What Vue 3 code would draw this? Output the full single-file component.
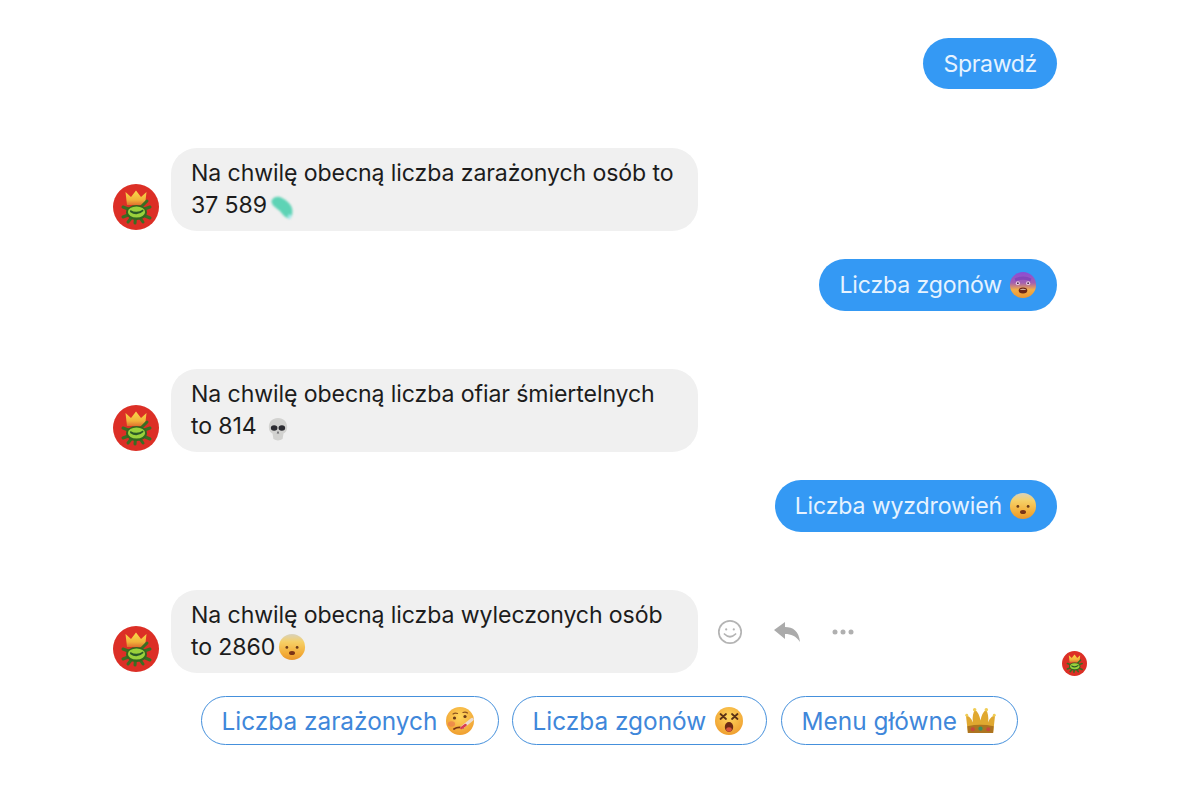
<script setup>
</script>

<template>
  <div class="page">
    <svg class="defs" width="0" height="0" aria-hidden="true">
      <defs>
        <radialGradient id="face" cx="50%" cy="35%" r="70%">
          <stop offset="0" stop-color="#ffd75e" />
          <stop offset="1" stop-color="#ee9a2c" />
        </radialGradient>
        <linearGradient id="sadface" x1="0" y1="0" x2="0" y2="1">
          <stop offset="0" stop-color="#d8d2bd" />
          <stop offset="0.3" stop-color="#f6d067" />
          <stop offset="0.75" stop-color="#f3ad38" />
          <stop offset="1" stop-color="#e8952c" />
        </linearGradient>
        <linearGradient id="purple" x1="0" y1="0" x2="0" y2="1">
          <stop offset="0" stop-color="#8a4bd6" />
          <stop offset="0.42" stop-color="#a45fb0" />
          <stop offset="0.68" stop-color="#f2ae48" />
          <stop offset="1" stop-color="#eb9530" />
        </linearGradient>
        <linearGradient id="crownfill" x1="0" y1="0" x2="0" y2="1">
          <stop offset="0" stop-color="#f8da4a" />
          <stop offset="0.65" stop-color="#f2b13a" />
          <stop offset="1" stop-color="#e0712e" />
        </linearGradient>
        <symbol id="avatar" viewBox="0 0 46 46">
          <circle cx="23" cy="23" r="23" fill="#dc2f26" />
          <path d="M14 21 L12.5 8 L18 13 L23 6.5 L28 13 L33.5 8 L32 21 Z" fill="url(#crownfill)" />
          <path d="M23 28 L10 23 M23 28 L10 33 M23 28 L15 38 M23 28 L22 39 M23 28 L30 38 M23 28 L37 34 M23 28 L37 23 M23 28 L34 17" stroke="#3a6e22" stroke-width="3" stroke-linecap="round" />
          <ellipse cx="23.5" cy="28.5" rx="10.5" ry="7.5" fill="#34661f" />
          <ellipse cx="23.5" cy="28" rx="8.6" ry="5.6" fill="#9ad13c" />
          <path d="M17 28 Q24 33 30.5 27 L30 25.4 Q24 30 17.4 26 Z" fill="#2a5a28" />
        </symbol>
        <symbol id="wave" viewBox="0 0 30 34">
          <path d="M3 8 C6 3 12 3 16 6 C22 9 28 15 27 22 C27 28 23 30 20 28 C16 26 15 23 12 20 C9 17 2 14 3 8 Z" fill="#5ed3b5" />
          <path d="M22 25 C25 23 27 26 25 29 C23 31 21 29 22 25 Z" fill="#a7e8ea" />
        </symbol>
        <symbol id="shock" viewBox="0 0 30 30">
          <circle cx="15" cy="15" r="14" fill="url(#purple)" />
          <path d="M6 8 Q15 4 24 8 L23 11 Q15 8 7 11 Z" fill="#7a3fb8" opacity="0.7" />
          <ellipse cx="9.5" cy="13" rx="2.2" ry="2" fill="#e9cfe9" />
          <ellipse cx="20.5" cy="13" rx="2.2" ry="2" fill="#e9cfe9" />
          <circle cx="9.5" cy="13" r="1" fill="#4a2a4a" />
          <circle cx="20.5" cy="13" r="1" fill="#4a2a4a" />
          <ellipse cx="15" cy="21" rx="4.6" ry="3.2" fill="#6d2716" />
          <path d="M11.8 19.6 Q15 18.6 18.2 19.6 L17.8 20.2 L12.2 20.2 Z" fill="#f0dfcc" />
        </symbol>
        <symbol id="sad" viewBox="0 0 30 30">
          <circle cx="15" cy="15" r="14" fill="url(#sadface)" />
          <circle cx="9.5" cy="15.5" r="1.5" fill="#6b3a18" />
          <circle cx="20.5" cy="15.5" r="1.5" fill="#6b3a18" />
          <ellipse cx="15" cy="21.5" rx="3.2" ry="2.2" fill="#7a3316" />
        </symbol>
        <symbol id="skull" viewBox="0 0 24 28">
          <path d="M12 2 C18 2 22 6 22 12 C22 16 20 18 18 19 L17 25 C14 27 10 27 7 25 L6 19 C4 18 2 16 2 12 C2 6 6 2 12 2 Z" fill="#d2d2d0" />
          <ellipse cx="7.8" cy="13" rx="3.6" ry="3" fill="#2c2c32" />
          <ellipse cx="16.2" cy="13" rx="3.6" ry="3" fill="#2c2c32" />
          <path d="M12 16 L13.4 19 L10.6 19 Z" fill="#66666a" />
        </symbol>
        <symbol id="thermo" viewBox="0 0 30 30">
          <circle cx="15" cy="15" r="14" fill="url(#face)" />
          <ellipse cx="6.5" cy="18" rx="3.6" ry="2.8" fill="#e9784f" opacity="0.65" />
          <circle cx="9.5" cy="12" r="1.6" fill="#6b3a18" />
          <circle cx="20" cy="10.5" r="1.6" fill="#6b3a18" />
          <path d="M8 8 Q10 6.5 12.5 7.5 M18 6.5 Q20.5 5.5 22.5 7" fill="none" stroke="#8a5220" stroke-width="1.2" stroke-linecap="round" />
          <path d="M9 23 Q13 20.5 18 22" fill="none" stroke="#7a3316" stroke-width="1.8" stroke-linecap="round" />
          <path d="M17 21.5 L27 13.5" stroke="#ecdcd0" stroke-width="3.2" stroke-linecap="round" />
          <path d="M16.5 22 L20.5 19" stroke="#d93c52" stroke-width="2.6" stroke-linecap="round" />
        </symbol>
        <symbol id="dizzy" viewBox="0 0 30 30">
          <circle cx="15" cy="15" r="14" fill="url(#face)" />
          <path d="M6.5 8 L12 13 M12 8 L6.5 13 M18 8 L23.5 13 M23.5 8 L18 13" stroke="#5b3216" stroke-width="1.8" stroke-linecap="round" />
          <ellipse cx="15" cy="21" rx="4.2" ry="5" fill="#6d2a14" />
          <ellipse cx="15" cy="23.5" rx="2.8" ry="2.2" fill="#d9573d" />
        </symbol>
        <symbol id="crown" viewBox="0 0 32 28">
          <path d="M3 27 L1 9 C4 9 7 12 8 16 C7.5 10 8.5 6 10 3 C13.5 5 15 9 16 14 C17 9 18.5 5 22 3 C23.5 6 24.5 10 24 16 C25 12 28 9 31 9 L29 27 Z" fill="#e0a830" />
          <path d="M3 27 L2.4 20 Q16 17 29.6 20 L29 27 Z" fill="#ad7420" />
          <circle cx="1.8" cy="8.5" r="1.5" fill="#f0cd55" />
          <circle cx="10" cy="3" r="1.8" fill="#f0cd55" />
          <circle cx="22" cy="3" r="1.8" fill="#f0cd55" />
          <circle cx="30.2" cy="8.5" r="1.5" fill="#f0cd55" />
          <circle cx="8" cy="23" r="2" fill="#c9463e" />
          <circle cx="16" cy="22.5" r="2.2" fill="#3d8f5a" />
          <circle cx="24" cy="23" r="2" fill="#c9463e" />
        </symbol>
      </defs>
    </svg>

    <div class="row row-out first">
      <div class="bubble out">Sprawdź</div>
    </div>

    <div class="row row-in">
      <svg class="avatar"><use href="#avatar" /></svg>
      <div class="bubble in">
        Na chwilę obecną liczba zarażonych osób to<br />37 589<svg class="emoji wave"><use href="#wave" /></svg>
      </div>
    </div>

    <div class="row row-out">
      <div class="bubble out">Liczba zgonów <svg class="emoji"><use href="#shock" /></svg></div>
    </div>

    <div class="row row-in">
      <svg class="avatar"><use href="#avatar" /></svg>
      <div class="bubble in">
        Na chwilę obecną liczba ofiar śmiertelnych<br />to 814 <svg class="emoji skull"><use href="#skull" /></svg>
      </div>
    </div>

    <div class="row row-out">
      <div class="bubble out">Liczba wyzdrowień <svg class="emoji"><use href="#sad" /></svg></div>
    </div>

    <div class="row row-in">
      <svg class="avatar"><use href="#avatar" /></svg>
      <div class="bubble in">
        Na chwilę obecną liczba wyleczonych osób<br />to 2860<svg class="emoji after-num"><use href="#sad" /></svg>
      </div>
      <div class="actions">
        <svg class="act" width="26" height="26" viewBox="0 0 26 26" fill="none" stroke="#b4b4b4" stroke-width="1.7">
          <circle cx="13" cy="13" r="11.2" />
          <circle cx="9.2" cy="10.4" r="1.1" fill="#b4b4b4" stroke="none" />
          <circle cx="16.8" cy="10.4" r="1.1" fill="#b4b4b4" stroke="none" />
          <path d="M7.4 15 Q13 20.5 18.6 15" stroke-linecap="round" />
        </svg>
        <svg class="act" width="28" height="22" viewBox="0 0 28 22">
          <path d="M1 9 L12 1 L12 6 C20 6 26 10 27 21 C23 15 18 13 12 13 L12 18 Z" fill="#ababab" />
        </svg>
        <svg class="act" width="24" height="8" viewBox="0 0 24 8" fill="#b0b0b0">
          <circle cx="4" cy="4" r="2.5" />
          <circle cx="12" cy="4" r="2.5" />
          <circle cx="20" cy="4" r="2.5" />
        </svg>
      </div>
      <svg class="seen"><use href="#avatar" /></svg>
    </div>

    <div class="replies">
      <div class="reply r1">Liczba zarażonych <svg class="emoji big"><use href="#thermo" /></svg></div>
      <div class="reply r2">Liczba zgonów <svg class="emoji big"><use href="#dizzy" /></svg></div>
      <div class="reply r3">Menu główne <svg class="emoji big crown"><use href="#crown" /></svg></div>
    </div>
  </div>
</template>

<style>
html, body { margin: 0; background: #fff; }
</style>

<style scoped>
.page {
  width: 1200px;
  height: 800px;
  box-sizing: border-box;
  display: flex;
  flex-direction: column;
  padding: 38px 113px 0;
  background: #fff;
  font-family: Inter, "Noto Sans", sans-serif;
  overflow: hidden;
}
.defs { position: absolute; }
.row { display: flex; flex: none; }
.row-out { justify-content: flex-end; padding-right: 30px; margin-top: 28px; }
.row-out.first { margin-top: 0; margin-bottom: 1px; }
.first .out { height: 51px; letter-spacing: -0.35px; }
.row-in { align-items: flex-end; margin-top: 58px; }
.bubble {
  box-sizing: border-box;
  font-size: 23.1px;
  letter-spacing: -0.1px;
  border-radius: 26px;
  white-space: nowrap;
}
.out {
  height: 52px;
  display: flex;
  align-items: center;
  gap: 7px;
  padding: 0 20px;
  background: #3499f4;
  color: #e6f3ff;
  letter-spacing: -0.15px;
}
.in {
  width: 527px;
  height: 83px;
  margin-left: 12px;
  padding: 9px 20px 0;
  line-height: 32px;
  background: #f0f0f0;
  color: #1c1c1c;
}
.avatar { width: 46px; height: 46px; flex: none; margin-bottom: 1px; filter: blur(0.6px); }
.emoji {
  width: 28px;
  height: 28px;
  vertical-align: -6px;
  flex: none;
  filter: blur(0.5px);
}
.after-num { margin-left: 3px; }
.wave { width: 26px; height: 30px; vertical-align: -10px; margin-left: 2px; filter: blur(1.1px); }
.skull { width: 22px; height: 26px; vertical-align: -8px; margin-left: 4px; filter: blur(0.6px); }
.actions {
  align-self: center;
  display: flex;
  align-items: center;
  gap: 30px;
  margin-left: 19px;
}
.act { display: block; filter: blur(0.3px); }
.seen {
  width: 25px;
  height: 25px;
  margin-left: auto;
  margin-bottom: -3px;
  filter: blur(0.4px);
}
.replies {
  display: flex;
  gap: 13px;
  margin: 23px 0 0 88px;
}
.reply {
  box-sizing: border-box;
  height: 49px;
  display: flex;
  align-items: center;
  gap: 8px;
  padding-left: 19.5px;
  border: 1.6px solid #4590dc;
  border-radius: 25px;
  color: #3f87da;
  font-size: 24.4px;
  white-space: nowrap;
}
.big { width: 30px; height: 30px; }
.crown { width: 31px; height: 29px; }
.r1 { width: 298px; }
.r2 { width: 255px; }
.r3 { width: 237px; margin-left: 1px; }
</style>
